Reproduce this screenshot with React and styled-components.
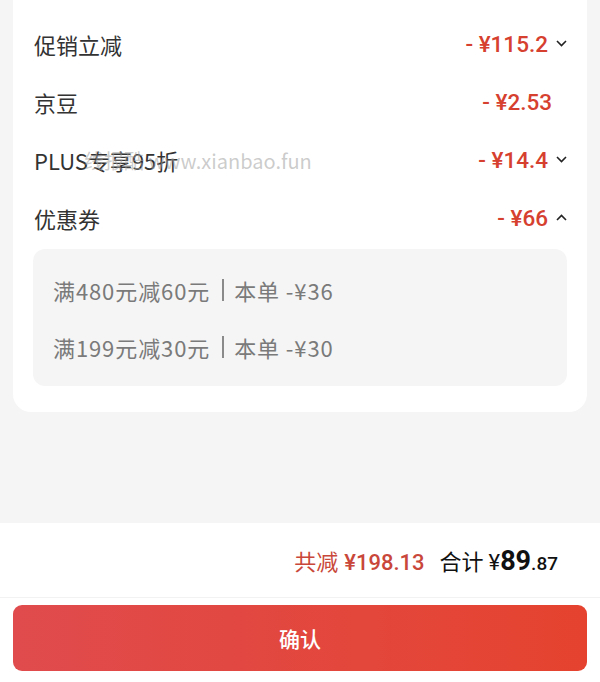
import React from 'react';
import styled, { createGlobalStyle } from 'styled-components';

const GlobalStyle = createGlobalStyle`
  html, body {
    margin: 0;
    padding: 0;
    background: #f5f5f5;
    font-family: "Noto Sans CJK SC", "Noto Sans", sans-serif;
  }
`;

const Page = styled.div`
  display: flex;
  flex-direction: column;
  height: 100vh;
  position: relative;
  overflow: hidden;
`;

const Card = styled.div`
  margin: 0 13px;
  padding: 15px 20px 26px 20px;
  background: #fff;
  border-radius: 0 0 18px 18px;
`;

const Row = styled.div`
  display: flex;
  align-items: center;
  justify-content: space-between;
  height: 58px;
  padding-left: 1px;
`;

const Label = styled.span`
  font-size: 22px;
  color: #333;
`;

const Value = styled.span`
  display: flex;
  align-items: center;
  gap: 8px;
  font-family: Roboto, "Noto Sans", sans-serif;
  font-size: 22.5px;
  font-weight: 500;
  color: #d6402f;
  padding-right: ${(p) => (p.$pad ? '15px' : '0')};
`;

const Chevron = styled.svg`
  width: 11px;
  height: 7px;
  margin-top: -2px;
`;

const CouponBox = styled.div`
  background: #f5f5f5;
  border-radius: 12px;
  padding: 12px 20px 11px 20px;
  margin-top: 2px;
`;

const CouponLine = styled.div`
  height: 57px;
  display: flex;
  align-items: center;
  gap: 8px;
  font-size: 22px;
  letter-spacing: 0.9px;
  color: #7a7a7a;
  white-space: pre;
`;

const Divider = styled.span`
  display: inline-block;
  width: 2px;
  height: 22px;
  background: #8a8a8a;
  margin: 0 2px 0 4px;
`;

const Filler = styled.div`
  flex: 1;
`;

const Footer = styled.div`
  background: #fff;
  display: flex;
  flex-direction: column;
`;

const Summary = styled.div`
  height: 74px;
  display: flex;
  align-items: center;
  justify-content: flex-end;
  padding-right: 42px;
  border-bottom: 1px solid #f2f2f2;
  gap: 15px;
`;

const Saved = styled.span`
  font-size: 22px;
  color: #c9473a;
  display: flex;
  align-items: baseline;
  gap: 6px;
`;

const Num = styled.span`
  font-family: Roboto, "Noto Sans", sans-serif;
  font-size: ${(p) => p.$size || '22px'};
  font-weight: ${(p) => p.$weight || 500};
`;

const Total = styled.span`
  font-size: 22px;
  color: #111;
  display: flex;
  align-items: baseline;
  gap: 5px;
`;

const Button = styled.button`
  margin: 7px 13px 11px 13px;
  height: 66px;
  border: none;
  border-radius: 9px;
  background: linear-gradient(90deg, #e04b4d 0%, #e5432f 100%);
  color: #fff;
  font-family: "Noto Sans CJK SC", sans-serif;
  font-size: 21px;
  font-weight: 500;
`;

const Watermark = styled.div`
  position: absolute;
  left: 84px;
  top: 146px;
  font-size: 20px;
  color: rgba(160, 160, 160, 0.55);
  font-family: "Noto Sans CJK SC", "Noto Sans", sans-serif;
  pointer-events: none;
`;

const Arrow = ({ up }) => (
  <Chevron viewBox="0 0 11 7">
    <polyline
      points={up ? '1,6 5.5,1.5 10,6' : '1,1 5.5,5.5 10,1'}
      fill="none"
      stroke="#222"
      strokeWidth="1.6"
    />
  </Chevron>
);

const rows = [
  { label: '促销立减', value: '- ¥115.2', arrow: 'down' },
  { label: '京豆', value: '- ¥2.53' },
  { label: 'PLUS专享95折', value: '- ¥14.4', arrow: 'down' },
  { label: '优惠券', value: '- ¥66', arrow: 'up' },
];

const coupons = [
  { rule: '满480元减60元', cut: '本单 -¥36' },
  { rule: '满199元减30元', cut: '本单 -¥30' },
];

export default function App() {
  return (
    <Page>
      <GlobalStyle />
      <Card>
        {rows.map((r) => (
          <Row key={r.label}>
            <Label>{r.label}</Label>
            <Value $pad={!r.arrow}>
              {r.value}
              {r.arrow && <Arrow up={r.arrow === 'up'} />}
            </Value>
          </Row>
        ))}
        <CouponBox>
          {coupons.map((c) => (
            <CouponLine key={c.rule}>
              <span>{c.rule}</span>
              <Divider />
              <span>{c.cut}</span>
            </CouponLine>
          ))}
        </CouponBox>
      </Card>
      <Filler />
      <Footer>
        <Summary>
          <Saved>
            共减 <Num>¥198.13</Num>
          </Saved>
          <Total>
            合计
            <span>
              <Num $weight={400}>¥</Num>
              <Num $size="27px" $weight={700}>89</Num>
              <Num $size="19px" $weight={500}>.87</Num>
            </span>
          </Total>
        </Summary>
        <Button>确认</Button>
      </Footer>
      <Watermark>线报酷 www.xianbao.fun</Watermark>
    </Page>
  );
}
